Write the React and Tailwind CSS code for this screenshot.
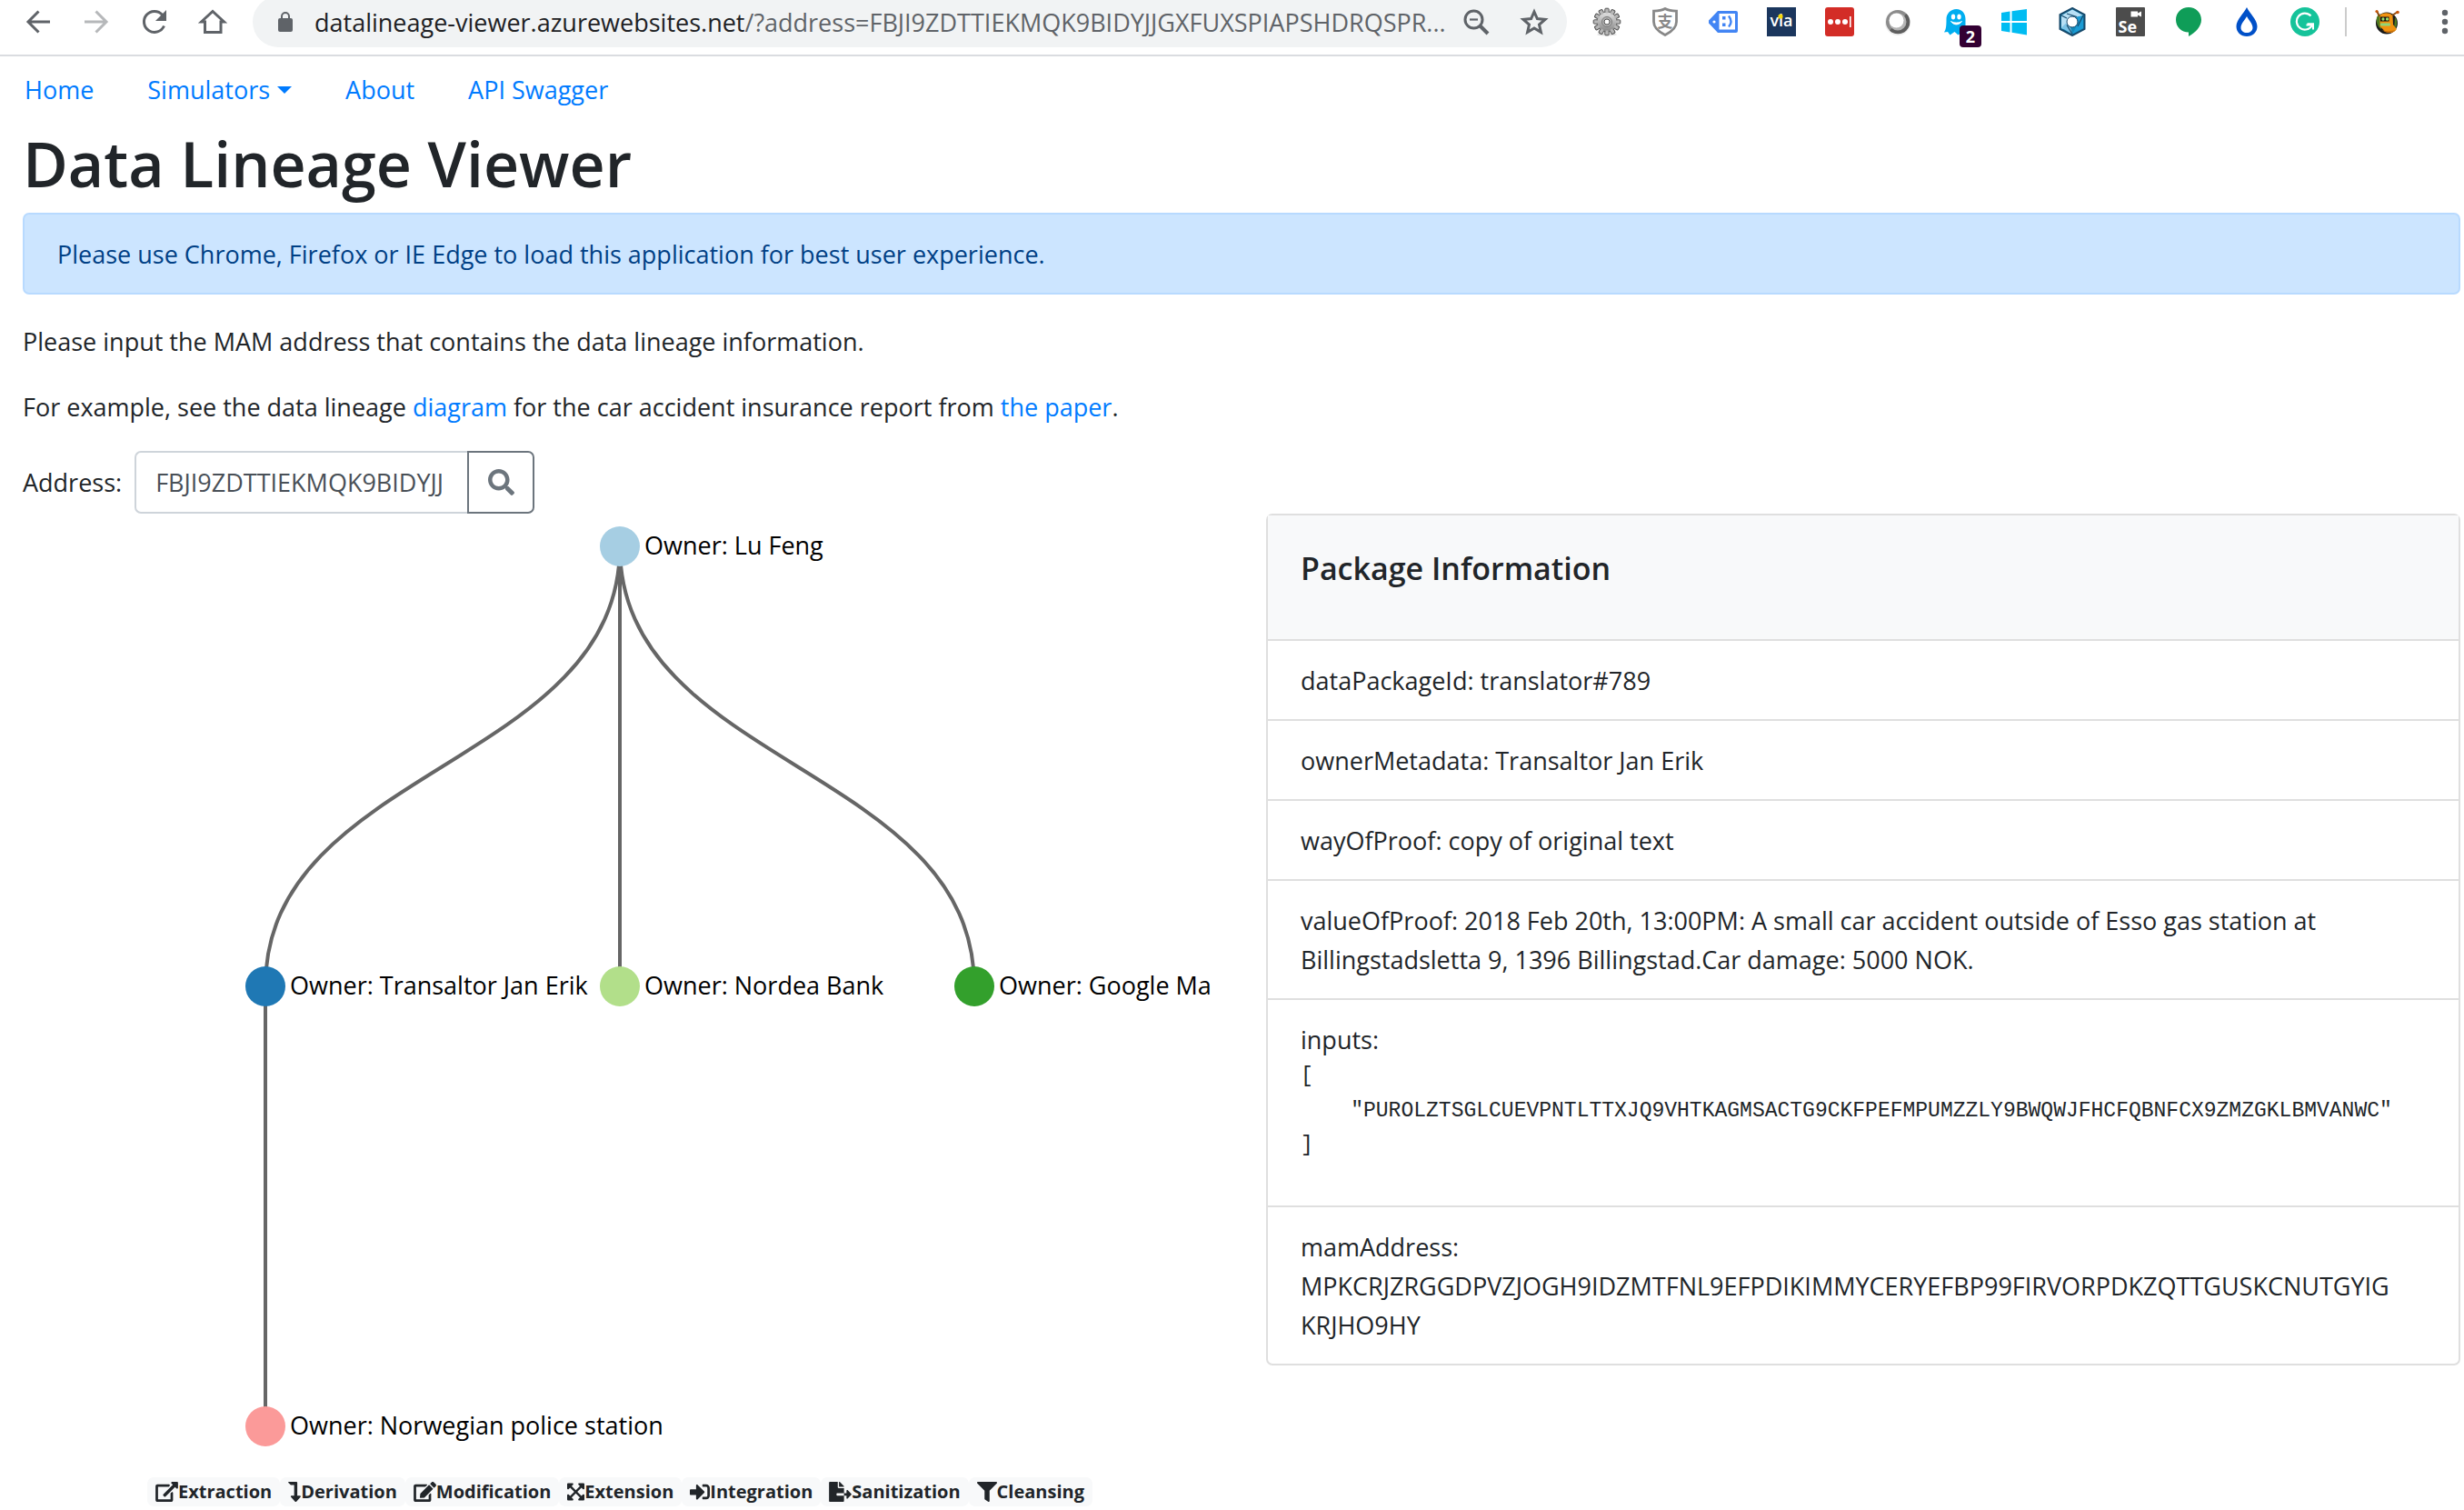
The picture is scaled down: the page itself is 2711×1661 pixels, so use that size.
import React from "react";
import {
  FaEdit,
  FaExpandArrowsAlt,
  FaFileExport,
  FaFilter,
  FaLevelDownAlt,
  FaSearch,
  FaSignInAlt,
} from "react-icons/fa";

/* ---------- browser toolbar icons ---------- */

const line = { fill: "none", stroke: "#5f6368", strokeWidth: 3 };

function BackIcon({ faded }) {
  return (
    <svg viewBox="0 0 32 32" className={faded ? "size-8 rotate-180 opacity-45" : "size-8"} {...line}>
      <path d="M29 16H5M16.5 4.5L5 16l11.5 11.5" />
    </svg>
  );
}

function ReloadIcon() {
  return (
    <svg viewBox="0 0 32 32" className="size-8" {...line}>
      <path d="M26.5 20.5A11.5 11.5 0 1 1 24.5 8.2" />
      <path d="M29 3v12H17z" fill="#5f6368" stroke="none" />
    </svg>
  );
}

function HomeIcon() {
  return (
    <svg viewBox="0 0 32 32" className="size-8" {...line}>
      <path d="M3.5 16L16 4.5 28.5 16H25v11.5H7.5V16z" strokeLinejoin="miter" />
    </svg>
  );
}

function LockIcon() {
  return (
    <svg viewBox="0 0 16 22" className="h-[22px] w-4">
      <rect y="7" width="16" height="15" rx="2" fill="#5f6368" />
      <path d="M4 8V5a4 4 0 0 1 8 0v3" fill="none" stroke="#5f6368" strokeWidth="2" />
    </svg>
  );
}

function ZoomOutIcon() {
  return (
    <svg viewBox="0 0 32 32" className="size-8" {...line}>
      <circle cx="13.5" cy="13.5" r="9.5" />
      <path d="M20 20l9 9" strokeWidth="4" />
      <path d="M9 13.5h9" strokeWidth="2.2" />
    </svg>
  );
}

function StarIcon() {
  return (
    <svg viewBox="0 0 32 32" className="size-8" {...line}>
      <path d="M16 5l3.4 7.6 8.6.8-6.5 5.6 1.9 8.4L16 23l-7.4 4.4 1.9-8.4L4 13.4l8.6-.8z" />
    </svg>
  );
}

const TEETH = [0, 30, 60, 90, 120, 150, 180, 210, 240, 270, 300, 330];

function GearIcon() {
  return (
    <svg viewBox="0 0 32 32" className="size-8">
      <defs>
        <linearGradient id="gear" x1="0" y1="0" x2="0" y2="1">
          <stop offset="0" stopColor="#e4e4e4" />
          <stop offset="1" stopColor="#858585" />
        </linearGradient>
      </defs>
      <ellipse cx="16" cy="30" rx="11" ry="1.5" fill="#ddd" />
      {TEETH.map((a) => (
        <rect key={a} x="13.8" y="1.2" width="4.4" height="6" rx="1" fill="#aaa" stroke="#555" transform={`rotate(${a} 16 16)`} />
      ))}
      <circle cx="16" cy="16" r="11" fill="url(#gear)" stroke="#666" strokeWidth=".8" />
      {TEETH.map((a) => (
        <rect key={a} x="14.6" y="2.5" width="2.8" height="4" fill="#b8b8b8" transform={`rotate(${a} 16 16)`} />
      ))}
      <circle cx="16" cy="16" r="5.5" fill="#b0b0b0" stroke="#7a7a7a" />
      <circle cx="16" cy="16" r="3" fill="#fff" stroke="#555" />
    </svg>
  );
}

function ShieldIcon() {
  return (
    <svg viewBox="0 0 32 32" className="size-8">
      <path d="M16 1.5c3.5 2 8 2.6 12.5 2.6V16c0 7-5.5 11-12.5 14.5C9 27 3.5 23 3.5 16V4.1C8 4.1 12.5 3.5 16 1.5z" fill="#fff" stroke="#888" strokeWidth="2.8" />
      <text x="16" y="21.5" fontSize="17" fontWeight="700" textAnchor="middle" fill="#888" className="font-['Noto_Sans_CJK_SC',sans-serif]">
        支
      </text>
    </svg>
  );
}

function TagIcon() {
  return (
    <svg viewBox="0 0 32 32" className="size-8">
      <path d="M10 4h20a2 2 0 0 1 2 2v20a2 2 0 0 1-2 2H10L1 18.5a3 3 0 0 1 0-5z" fill="#4285f4" />
      <rect x="11.5" y="7" width="17.5" height="17.5" fill="#fff" />
      <circle cx="6" cy="16" r="1.6" fill="#fff" />
      <path d="M15 10h3.5v3.5H15zM15 17.5h3.5V21H15z" fill="#4285f4" />
      <path d="M22 9.5q5 6.500 0 12" fill="none" stroke="#4285f4" strokeWidth="2.4" />
    </svg>
  );
}

function ViaIcon() {
  return (
    <svg viewBox="0 0 32 32" className="size-8">
      <rect width="32" height="32" fill="#1b365d" />
      <text x="16" y="21" fontSize="18" fontWeight="600" textAnchor="middle" fill="#fff">
        via
      </text>
      <circle cx="15" cy="10" r="2.6" fill="#f5d90a" />
    </svg>
  );
}

function DotsIcon() {
  return (
    <svg viewBox="0 0 32 32" className="size-8">
      <rect width="32" height="32" rx="3" fill="#d32d27" />
      <g fill="#fff">
        <circle cx="6" cy="16" r="3" />
        <circle cx="14" cy="16" r="3" />
        <circle cx="22" cy="16" r="3" />
        <rect x="27" y="10" width="1.6" height="12" />
      </g>
    </svg>
  );
}

function RingIcon() {
  return (
    <svg viewBox="0 0 32 32" className="size-8">
      <circle cx="16" cy="17" r="14" fill="#eee" />
      <circle cx="16" cy="16" r="13" fill="#8c8c8c" />
      <path d="M25.5 7a13 13 0 1 1-18.5 18.5z" fill="#5e5e5e" />
      <circle cx="16" cy="16" r="9.5" fill="#b5b5b5" />
      <circle cx="14.5" cy="14.5" r="8" fill="#fff" />
    </svg>
  );
}

function GhostIcon() {
  return (
    <span className="relative">
      <svg viewBox="0 0 32 32" className="size-8">
        <path d="M16.5 2C23 2 26.5 7 26.5 13v16l-4-1.5-4 3-4-3.5-5 3.5L7 27l-4 .5c2-3 2.5-6 2.5-14.5C5.5 7 10 2 16.5 2z" fill="#00aef0" />
        <ellipse cx="13" cy="10.5" rx="2.2" ry="3" fill="#fff" />
        <ellipse cx="19.5" cy="10.5" rx="2.2" ry="3" fill="#fff" />
        <path d="M10.5 15.5c3 4.5 9 4.5 12 0-3.5 2-8.5 2-12 0z" fill="#fff" stroke="#fff" />
      </svg>
      <span className="absolute top-5 left-5 flex size-6 items-center justify-center rounded bg-[#330033] text-lg leading-none font-bold text-white">
        2
      </span>
    </span>
  );
}

function WindowsIcon() {
  return (
    <svg viewBox="0 0 32 32" className="size-8" fill="#00bcf2">
      <path d="M2 6l9.5-1.4V15H2zM13.5 4.3L30 2v13H13.5zM2 17h9.5v10.4L2 26zM13.5 17H30v13.5l-16.5-2.7z" />
    </svg>
  );
}

function CubeIcon() {
  return (
    <svg viewBox="0 0 32 32" className="size-8">
      <path d="M16 1l13.5 7v16L16 31 2.5 24V8z" fill="#1288b9" stroke="#17496b" strokeWidth="2" />
      <path d="M16 2.5L28 9l-7 2-5-2-9 15-3-1V9z" fill="#b8e0f5" />
      <path d="M28 9v14l-12 6.5 7-13-2-6z" fill="#1b9bd4" />
      <path d="M4 22.5l12 7-2-7-5-5z" fill="#7cc3e6" />
      <path d="M10 7l11 3.5M28 9l-6 12M16 29.5l-6-10M4 9l6 3" stroke="#17496b" strokeWidth="1.2" />
      <circle cx="16" cy="16" r="6" fill="#fff" stroke="#17496b" />
    </svg>
  );
}

function SeleniumIcon() {
  return (
    <svg viewBox="0 0 32 32" className="size-8">
      <rect width="32" height="32" rx="1" fill="#4c4c4c" />
      <path d="M16.5 4.5H24v2l4-2v6l-4-2v2h-7.5z" fill="#fff" />
      <text x="2.5" y="28" fontSize="18" fontWeight="700" fill="#fff">
        Se
      </text>
    </svg>
  );
}

function ChatIcon() {
  return (
    <svg viewBox="0 0 32 32" className="size-8">
      <path d="M16 0c8 0 14 6 14 13.7C30 21 24 27.5 16 32v-4.6C8 27.4 2 21.5 2 13.7 2 6 8 0 16 0z" fill="#0f9d58" />
    </svg>
  );
}

function DropIcon() {
  return (
    <svg viewBox="0 0 32 32" className="size-8">
      <path d="M16 0c3 6.5 11.5 13.5 11.5 21 0 6.5-5 11-11.5 11S4.5 27.5 4.5 21C4.5 13.5 13 6.5 16 0z" fill="#0050c8" />
      <path d="M16 10c2 4 6.5 8 6.5 12.5 0 3.5-3 5.5-6.5 5.5s-6.5-2-6.5-5.5C9.5 18 14 14 16 10z" fill="#fff" />
    </svg>
  );
}

function GrammarIcon() {
  return (
    <svg viewBox="0 0 32 32" className="size-8">
      <circle cx="16" cy="16" r="16" fill="#15c39a" />
      <path d="M22.5 9.5A9 9 0 1 0 24 19.5h-6.500" fill="none" stroke="#fff" strokeWidth="2.2" />
      <path d="M18.5 18.2H25V24.5" fill="none" stroke="#fff" strokeWidth="2" />
    </svg>
  );
}

function AvatarIcon() {
  return (
    <svg viewBox="0 0 32 32" className="size-8">
      <ellipse cx="16" cy="17.5" rx="12" ry="12" fill="#1a1a1a" />
      <path d="M5 11c1-3 4-4 5-3v16c-4-2-6-8-5-13zM25 11c3 3 3 10-1 14z" fill="#4e7a1e" />
      <path d="M8.5 9c2-3 10-4 14 0l.5 10 4 5c-3 5-12 5-14.5 1l-4-4z" fill="#f0920f" />
      <path d="M11 25c5 2 11 1 15 0-3 4-11 4-15 0z" fill="#c86f08" />
      <path d="M8 10L5 4M22 9l6-4" stroke="#8a4b10" strokeWidth="2" />
      <circle cx="5" cy="4.5" r="1.6" fill="#c8560a" />
      <circle cx="28" cy="5.5" r="1.8" fill="#c8560a" />
      <path d="M9 10.5h9.5v5H9z" fill="#111" />
      <ellipse cx="12" cy="13" rx="1.6" ry="1.8" fill="#9be36d" />
      <ellipse cx="16.5" cy="13" rx="1.6" ry="1.8" fill="#9be36d" />
      <rect x="9" y="17.5" width="11" height="3" rx="1" fill="#8ed67a" />
    </svg>
  );
}

function MenuIcon() {
  return (
    <svg viewBox="0 0 8 32" className="h-8 w-2" fill="#5f6368">
      <circle cx="4" cy="6" r="3.2" />
      <circle cx="4" cy="16" r="3.2" />
      <circle cx="4" cy="26" r="3.2" />
    </svg>
  );
}

function IconButton({ label, children }) {
  return (
    <button type="button" aria-label={label} className="flex h-12 w-16 shrink-0 items-center justify-center">
      {children}
    </button>
  );
}

const EXTENSIONS = [
  ["Settings extension", GearIcon],
  ["Shield extension", ShieldIcon],
  ["Tag extension", TagIcon],
  ["Via extension", ViaIcon],
  ["Password extension", DotsIcon],
  ["Ring extension", RingIcon],
  ["Ghost extension", GhostIcon],
  ["Windows extension", WindowsIcon],
  ["Cube extension", CubeIcon],
  ["Selenium extension", SeleniumIcon],
  ["Chat extension", ChatIcon],
  ["Drop extension", DropIcon],
  ["Grammar extension", GrammarIcon],
];

function Toolbar() {
  return (
    <header className="flex h-[62px] items-start overflow-hidden border-b-2 border-[#dadce0] pl-[10px]">
      <IconButton label="Back"><BackIcon /></IconButton>
      <IconButton label="Forward"><BackIcon faded /></IconButton>
      <IconButton label="Reload"><ReloadIcon /></IconButton>
      <IconButton label="Home page"><HomeIcon /></IconButton>
      <div className="mx-3 -mt-1 flex h-14 min-w-0 flex-1 items-center rounded-full bg-[#f1f3f4] pr-1 pl-7">
        <LockIcon />
        <div className="ml-6 min-w-0 flex-1 whitespace-nowrap text-[#5f6368]">
          <span className="text-[#202124]">datalineage-viewer.azurewebsites.net</span>
          /?address=FBJI9ZDTTIEKMQK9BIDYJJGXFUXSPIAPSHDRQSPR...
        </div>
        <IconButton label="Zoom"><ZoomOutIcon /></IconButton>
        <IconButton label="Bookmark"><StarIcon /></IconButton>
      </div>
      {EXTENSIONS.map(([label, Icon]) => (
        <IconButton key={label} label={label}><Icon /></IconButton>
      ))}
      <div className="mx-3 mt-2 h-8 w-0.5 bg-[#ccc]" />
      <IconButton label="Profile"><AvatarIcon /></IconButton>
      <button type="button" aria-label="Menu" className="flex h-12 items-center pr-[17px] pl-7">
        <MenuIcon />
      </button>
    </header>
  );
}

/* ---------- page ---------- */

function Nav() {
  return (
    <nav className="flex items-center gap-[59px] pt-[15px] pb-[18px] pl-0.5 text-[#007bff]">
      <a href="#home">Home</a>
      <a href="#simulators" className="flex items-center gap-2">
        Simulators
        <span className="border-x-8 border-t-8 border-x-transparent border-t-[#007bff]" />
      </a>
      <a href="#about">About</a>
      <a href="#swagger">API Swagger</a>
    </nav>
  );
}

function AddressForm() {
  return (
    <form className="flex items-center" onSubmit={(e) => e.preventDefault()}>
      <label htmlFor="address" className="mr-[14px]">Address:</label>
      <input
        id="address"
        type="text"
        defaultValue="FBJI9ZDTTIEKMQK9BIDYJJGXFUXSPIAPSHDRQSPR"
        className="h-[69px] w-[366px] rounded-l-[7px] border-2 border-r-0 border-[#ced4da] pr-7 pl-[21px] text-[#495057]"
      />
      <button
        type="submit"
        aria-label="Search"
        className="flex h-[69px] w-[74px] items-center justify-center rounded-r-[7px] border-2 border-[#6c757d] text-[#6c757d]"
      >
        <FaSearch className="size-[29px]" />
      </button>
    </form>
  );
}

const NODES = [
  { x: 657, y: 36, color: "#a6cee3", label: "Owner: Lu Feng" },
  { x: 267, y: 520, color: "#1f78b4", label: "Owner: Transaltor Jan Erik" },
  { x: 657, y: 520, color: "#b2df8a", label: "Owner: Nordea Bank" },
  { x: 1047, y: 520, color: "#33a02c", label: "Owner: Google Ma" },
  { x: 267, y: 1004, color: "#fb9a99", label: "Owner: Norwegian police station" },
];

const EDGES = [[0, 1], [0, 2], [0, 3], [1, 4]];

function edgePath([from, to]) {
  const a = NODES[from];
  const b = NODES[to];
  const mid = (a.y + b.y) / 2;
  return `M${a.x} ${a.y}C${a.x} ${mid} ${b.x} ${mid} ${b.x} ${b.y}`;
}

function LineageGraph() {
  return (
    <svg viewBox="0 0 1314 1050" className="block w-full">
      {EDGES.map((edge) => (
        <path key={edge.join("-")} d={edgePath(edge)} fill="none" stroke="#666" strokeWidth="4" />
      ))}
      {NODES.map((node) => (
        <g key={node.label}>
          <circle cx={node.x} cy={node.y} r="22" fill={node.color} />
          <text x={node.x + 27} y={node.y + 9} fontSize="27">
            {node.label}
          </text>
        </g>
      ))}
    </svg>
  );
}

function ExternalLinkIcon({ className }) {
  return (
    <svg viewBox="0 0 576 512" fill="currentColor" className={className}>
      <path d="M576 24v127.984c0 21.461-25.96 31.98-40.971 16.971l-35.707-35.709-243.523 243.523c-9.373 9.373-24.568 9.373-33.941 0l-22.627-22.627c-9.373-9.373-9.373-24.569 0-33.941L442.756 76.676l-35.703-35.705C391.982 25.9 402.656 0 424.024 0H552c13.255 0 24 10.745 24 24zM407.029 270.794l-16 16A23.999 23.999 0 0 0 384 303.765V448H64V128h264a24.003 24.003 0 0 0 16.97-7.029l16-16C376.089 89.851 365.381 64 344 64H48C21.49 64 0 85.49 0 112v352c0 26.51 21.49 48 48 48h352c26.51 0 48-21.49 48-48V287.764c0-21.382-25.852-32.09-40.971-16.97z" />
    </svg>
  );
}

const LEGEND = [
  ["Extraction", ExternalLinkIcon, "h-[22px] w-[25px]"],
  ["Derivation", FaLevelDownAlt, "h-[22px] w-[14px]"],
  ["Modification", FaEdit, "h-[22px] w-[25px]"],
  ["Extension", FaExpandArrowsAlt, "h-[22px] w-[19px]"],
  ["Integration", FaSignInAlt, "h-[22px] w-[22px]"],
  ["Sanitization", FaFileExport, "h-[22px] w-[25px]"],
  ["Cleansing", FaFilter, "h-[22px] w-[22px]"],
];

function Legend() {
  return (
    <ul className="mt-[10px] flex justify-center text-[20px] leading-8 font-bold">
      {LEGEND.map(([name, Icon, size]) => (
        <li key={name} className="flex items-center rounded-[7px] bg-[#f8f9fa] px-[9px]">
          <Icon className={size} />
          {name}
        </li>
      ))}
    </ul>
  );
}

function Row({ children }) {
  return (
    <li className="border-b-2 border-[#dfdfdf] px-9 pt-[22px] pb-[21px] last:border-b-0">{children}</li>
  );
}

function PackageCard() {
  return (
    <section className="rounded-[7px] border-2 border-[#dfdfdf]">
      <div className="border-b-2 border-[#dfdfdf] bg-[#f8f9fa] px-9 pt-[37px] pb-[57px]">
        <h2 className="text-[34px] leading-[42px] font-semibold">Package Information</h2>
      </div>
      <ul>
        <Row>dataPackageId: translator#789</Row>
        <Row>ownerMetadata: Transaltor Jan Erik</Row>
        <Row>wayOfProof: copy of original text</Row>
        <Row>
          valueOfProof: 2018 Feb 20th, 13:00PM: A small car accident outside of Esso gas station at
          Billingstadsletta 9, 1396 Billingstad.Car damage: 5000 NOK.
        </Row>
        <Row>
          inputs:
          <pre className="mb-[26px] font-['Liberation_Mono',monospace] text-[23px] leading-[38px]">
            {'[\n    "PUROLZTSGLCUEVPNTLTTXJQ9VHTKAGMSACTG9CKFPEFMPUMZZLY9BWQWJFHCFQBNFCX9ZMZGKLBMVANWC"\n]'}
          </pre>
        </Row>
        <Row>
          mamAddress:
          <br />
          MPKCRJZRGGDPVZJOGH9IDZMTFNL9EFPDIKIMMYCERYEFBP99FIRVORPDKZQTTGUSKCNUTGYIG
          <br />
          KRJHO9HY
        </Row>
      </ul>
    </section>
  );
}

export default function App() {
  return (
    <div className="min-h-screen bg-white font-['Open_Sans','Noto_Sans_CJK_SC',sans-serif] text-[27px] leading-[43px] text-[#212529]">
      <Toolbar />
      <main className="pr-1 pl-[25px]">
        <Nav />
        <h1 className="mb-3 text-[68px] leading-[84px] font-semibold">Data Lineage Viewer</h1>
        <div role="alert" className="mb-[30px] rounded-[7px] border-2 border-[#b8daff] bg-[#cce5ff] px-9 pt-[22px] pb-[21px] text-[#004085]">
          Please use Chrome, Firefox or IE Edge to load this application for best user experience.
        </div>
        <p className="mb-[29px]">Please input the MAM address that contains the data lineage information.</p>
        <p className="mb-[27px]">
          For example, see the data lineage <a href="#diagram" className="text-[#007bff]">diagram</a> for the
          car accident insurance report from <a href="#paper" className="text-[#007bff]">the paper</a>.
        </p>
        <AddressForm />
        <div className="grid grid-cols-2 items-start gap-[54px]">
          <div className="min-w-0">
            <LineageGraph />
            <Legend />
          </div>
          <PackageCard />
        </div>
      </main>
    </div>
  );
}
